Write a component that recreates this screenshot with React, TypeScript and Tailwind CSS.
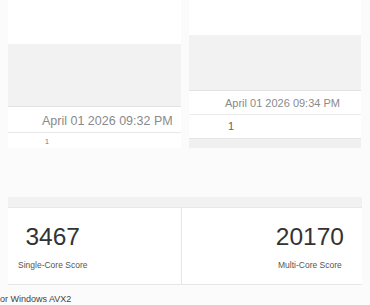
const App: React.FC = () => {
  return (
    <div className="w-[370px] h-[305px] overflow-hidden bg-[#fbfbfb] font-['Liberation_Sans',Arial,sans-serif]">
      {/* 상단 - 결과 카드 두 개 */}
      <div className="flex items-start gap-2 px-2 h-[148px] overflow-hidden">
        <div className="w-[173px] h-[148px] overflow-hidden bg-white shrink-0">
          <div className="h-[44px] bg-white" />
          <div className="h-[63px] bg-[#f2f2f2] border-b border-[#e3e3e3]" />
          <div className="h-[26px] flex items-center pl-[34px] pt-[3px] border-b border-[#e8e8e8] text-[12.5px] text-[#8a8a8a]">
            April 01 2026 09:32 PM
          </div>
          <div className="h-[14px] pl-[37px] pt-[5px] text-[7px] leading-[8px] text-[#777]">1</div>
        </div>

        <div className="w-[172px] h-[148px] overflow-hidden bg-white shrink-0">
          <div className="h-[35px] bg-white" />
          <div className="h-[56px] bg-[#f2f2f2] border-b border-[#e3e3e3]" />
          <div className="h-[24px] flex items-center pl-[36px] pt-[1px] border-b border-[#ececec] text-[11px] text-[#8a8a8a]">
            April 01 2026 09:34 PM
          </div>
          <div className="h-[23px] flex items-center pl-[39px] text-[11px] text-[#666]">1</div>
          <div className="h-[10px] bg-[#f0f0f0] border-t border-[#e6e6e6]" />
        </div>
      </div>

      {/* 하단 - 점수 패널 */}
      <div className="mt-[49px] mx-2">
        <div className="h-[11px] bg-[#f1f1f1] border-b border-[#e8e8e8]" />
        <div className="flex h-[77px] bg-white border-b border-[#e6e6e6]">
          <div className="flex-1 border-r border-[#e6e6e6] pl-[10px]">
            <div className="inline-flex flex-col items-center pt-[15px]">
              <span className="text-[24.5px] leading-[28px] text-[#333]">3467</span>
              <span className="mt-[8px] text-[8.5px] leading-[12px] text-[#555]">Single-Core Score</span>
            </div>
          </div>
          <div className="flex-1 flex justify-end pr-[18px]">
            <div className="inline-flex flex-col items-center pt-[15px]">
              <span className="text-[24.5px] leading-[28px] text-[#333]">20170</span>
              <span className="mt-[8px] text-[8.5px] leading-[12px] text-[#555]">Multi-Core Score</span>
            </div>
          </div>
        </div>
      </div>

      <div className="mt-[8px] text-[9px] leading-[12px] text-[#444] whitespace-nowrap">
        or Windows AVX2
      </div>
    </div>
  );
};

export default App;
